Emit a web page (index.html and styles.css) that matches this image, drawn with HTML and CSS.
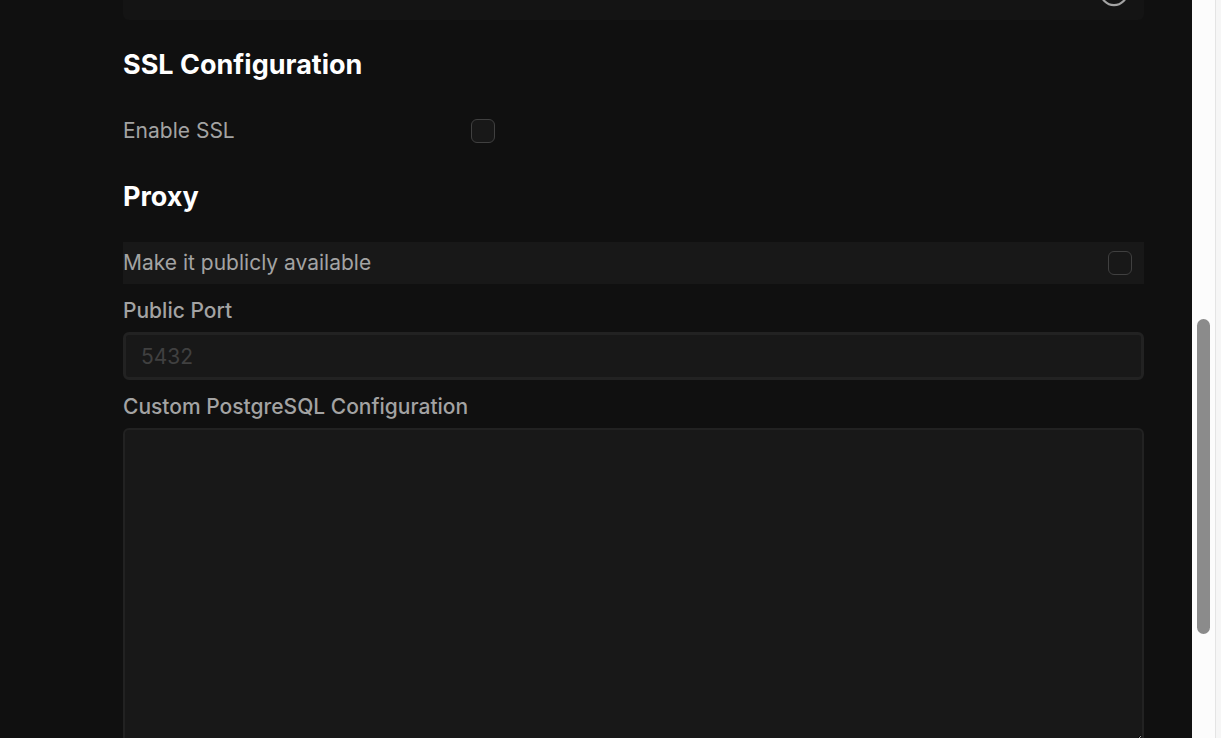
FILE: index.html
```html
<!DOCTYPE html>
<html lang="en">
<head>
<meta charset="utf-8">
<title>Database configuration</title>
<link rel="stylesheet" href="styles.css">
</head>
<body>
<div class="window">
  <main class="content">
    <div class="field-end">
      <svg class="eye" viewBox="0 0 30 8" aria-hidden="true"><circle cx="15" cy="-8" r="13.2" fill="none" stroke="#a3a3a3" stroke-width="2.2"/></svg>
    </div>
    <form class="form">
      <h2 class="heading">SSL Configuration</h2>
      <div class="check-row check-row-narrow">
        <label for="ssl">Enable SSL</label>
        <input class="checkbox" type="checkbox" id="ssl">
      </div>
      <h2 class="heading">Proxy</h2>
      <div class="check-row check-row-filled">
        <label for="public">Make it publicly available</label>
        <input class="checkbox checkbox-inset" type="checkbox" id="public">
      </div>
      <label class="label" for="port">Public Port</label>
      <input class="port" type="text" id="port" placeholder="5432">
      <label class="label" for="config">Custom PostgreSQL Configuration</label>
      <textarea class="config" id="config"></textarea>
    </form>
  </main>
  <div class="track"><div class="thumb"></div></div>
  <div class="edge"></div>
</div>
</body>
</html>
```
FILE: styles.css
```css
* {
  box-sizing: border-box;
}

body {
  margin: 0;
  background: #101010;
  color: #a3a3a3;
  font-family: Inter, "Liberation Sans", sans-serif;
  font-size: 21px;
  line-height: 30px;
}

.window {
  display: flex;
  height: 100vh;
  overflow: hidden;
}

.content {
  flex: 1;
  min-width: 0;
  padding: 0 48px 0 123px;
  overflow: hidden;
}

.field-end {
  display: flex;
  justify-content: flex-end;
  height: 20px;
  padding-right: 15px;
  border-radius: 0 0 6px 6px;
  background: #141414;
}

.eye {
  width: 30px;
  height: 8px;
}

.form {
  display: flex;
  flex-direction: column;
  padding-top: 26px;
}

.heading {
  margin: 0 0 26px;
  color: #fff;
  font-size: 27px;
  font-weight: 700;
  line-height: 38px;
}

.check-row {
  display: flex;
  align-items: center;
  justify-content: space-between;
  height: 42px;
}

.check-row-narrow {
  width: 372px;
  margin-bottom: 26px;
}

.check-row-filled {
  background: #181818;
}

.checkbox {
  appearance: none;
  width: 24px;
  height: 24px;
  margin: 0;
  border: 1px solid #404040;
  border-radius: 6px;
  background: #181818;
}

.checkbox-inset {
  margin-right: 12px;
}

.label {
  padding: 12px 0 6px;
  font-weight: 500;
}

.port {
  width: 100%;
  height: 48px;
  margin: 0;
  padding: 0 15px;
  border: 3px solid #222;
  border-radius: 6px;
  background: #181818;
  color: #fff;
  font: inherit;
}

.port::placeholder {
  color: #404040;
  opacity: 1;
}

.config {
  width: 100%;
  height: 317px;
  margin: 0;
  padding: 9px 15px;
  border: 2px solid #222;
  border-radius: 6px;
  background: #181818;
  color: #fff;
  font: inherit;
  resize: vertical;
}

.track {
  width: 24px;
  padding: 319px 6px 0 5px;
  border-right: 1px solid #e4e4e4;
  background: #fcfcfc;
}

.thumb {
  width: 13px;
  height: 315px;
  border-radius: 7px;
  background: #8b8b8b;
}

.edge {
  width: 5px;
  background: #f6f6f6;
}
```
